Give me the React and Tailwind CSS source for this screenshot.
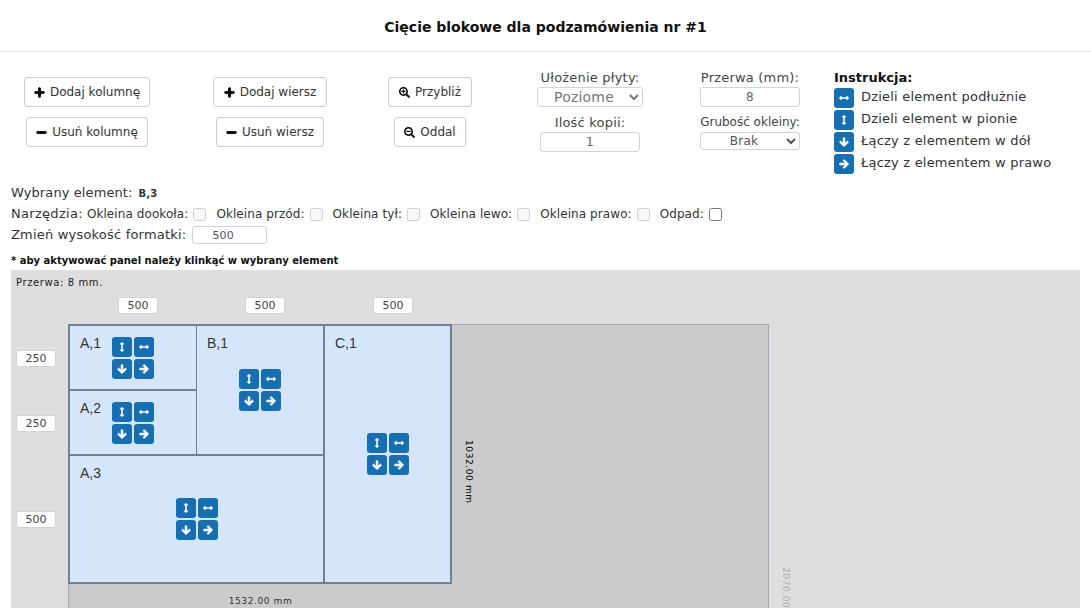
import {
  FaArrowDown,
  FaArrowRight,
  FaArrowsAltH,
  FaArrowsAltV,
  FaMinus,
  FaPlus,
  FaSearchMinus,
  FaSearchPlus,
} from "react-icons/fa";

const ToolButton = ({ icon: Icon, label, className = "", bold = true }) => (
  <button
    className={`flex h-[30px] items-center justify-center gap-[5px] rounded-[3px] border border-[#cfcfcf] bg-white text-[12px] text-[#333] ${className}`}
  >
    <Icon
      className="text-[11px] text-black"
      stroke="currentColor"
      strokeWidth={bold ? 40 : 0}
    />
    {label}
  </button>
);

const IconSquare = ({ icon: Icon, bold = false }) => (
  <div className="flex h-5 w-5 items-center justify-center rounded-[3px] bg-[#176eb0] text-white">
    {bold ? (
      <Icon size={10} stroke="currentColor" strokeWidth={50} />
    ) : (
      <Icon size={10} />
    )}
  </div>
);

const CellActions = () => (
  <div className="grid grid-cols-[20px_20px] gap-0.5">
    <IconSquare icon={FaArrowsAltV} />
    <IconSquare icon={FaArrowsAltH} />
    <IconSquare icon={FaArrowDown} bold />
    <IconSquare icon={FaArrowRight} bold />
  </div>
);

const Piece = ({ name, className = "" }) => (
  <div className={`flex border-[#707f96] bg-[#d6e6fa] ${className}`}>
    <span className="absolute ml-[10px] mt-[9px] font-['Liberation_Sans',sans-serif] text-[14px] leading-4 text-[#333]">
      {name}
    </span>
    <div className="m-auto">
      <CellActions />
    </div>
  </div>
);

const SizeInput = ({ value = "500", className = "" }) => (
  <input
    readOnly
    value={value}
    className={`h-[17px] w-10 rounded-[3px] border border-[#d4d4d4] bg-white text-center text-[11px] text-[#444] outline-none ${className}`}
  />
);

const Instruction = ({ icon, bold, text }) => (
  <div className="flex h-[22px] items-center gap-[7px] text-[13px] tracking-[0.2px] text-[#333]">
    <IconSquare icon={icon} bold={bold} />
    <span className="pb-0.5">{text}</span>
  </div>
);

const Edging = ({ label }) => (
  <>
    <span className="tracking-[0.08px]">{label}</span>
    <input type="checkbox" disabled className="ml-[5px] mr-[10px]" />
  </>
);

const App = () => {
  return (
    <div className="h-screen overflow-hidden bg-white font-['DejaVu_Sans',sans-serif] text-[#333]">
      {/* Header */}
      <div className="flex h-[52px] items-center justify-center border-b border-[#e4e4e4] pt-[3px] text-[14px] font-bold text-[#111]">
        Cięcie blokowe dla podzamówienia nr #1
      </div>

      {/* Toolbar */}
      <div className="flex h-[131px] pt-[25px]">
        <div className="flex w-[174px] flex-col items-center gap-2.5">
          <ToolButton icon={FaPlus} label="Dodaj kolumnę" className="w-[126px]" />
          <ToolButton icon={FaMinus} label="Usuń kolumnę" className="w-[122px]" />
        </div>
        <div className="flex w-[192px] flex-col items-center gap-2.5">
          <ToolButton icon={FaPlus} label="Dodaj wiersz" className="w-[114px]" />
          <ToolButton icon={FaMinus} label="Usuń wiersz" className="w-[108px]" />
        </div>
        <div className="flex w-[128px] flex-col items-center gap-2.5">
          <ToolButton icon={FaSearchPlus} label="Przybliż" className="w-[84px]" bold={false} />
          <ToolButton icon={FaSearchMinus} label="Oddal" className="w-[72px]" bold={false} />
        </div>
        <div className="-mt-2 flex w-[192px] flex-col items-center text-[13px] tracking-[0.2px] text-[#444]">
          <span className="h-[18px] leading-[18px]">Ułożenie płyty:</span>
          <select className="h-5 w-[106px] rounded-[3px] border border-[#d4d4d4] text-center text-[14px] text-[#777]">
            <option>Poziome</option>
          </select>
          <span className="mt-[6px] h-[19px] leading-[19px]">Ilość kopii:</span>
          <input
            readOnly
            value="1"
            className="h-5 w-[100px] rounded-[3px] border border-[#d4d4d4] text-center text-[12px] text-[#666] outline-none"
          />
        </div>
        <div className="-mt-2 flex w-[128px] flex-col items-center text-[13px] tracking-[0.2px] text-[#444]">
          <span className="h-[18px] leading-[18px]">Przerwa (mm):</span>
          <input
            readOnly
            value="8"
            className="h-5 w-[100px] rounded-[3px] border border-[#d4d4d4] text-center text-[12px] text-[#666] outline-none"
          />
          <span className="mt-[6px] h-[19px] text-[12px] tracking-normal leading-[19px]">Grubość okleiny:</span>
          <select className="h-[18px] w-[100px] rounded-[3px] border border-[#d4d4d4] text-center text-[12px] text-[#555]">
            <option>Brak</option>
          </select>
        </div>
        <div className="-mt-2 ml-5 flex flex-col">
          <span className="h-[18px] text-[13px] font-bold leading-[18px] text-[#111]">Instrukcja:</span>
          <Instruction icon={FaArrowsAltH} text="Dzieli element podłużnie" />
          <Instruction icon={FaArrowsAltV} text="Dzieli element w pionie" />
          <Instruction icon={FaArrowDown} bold text="Łączy z elementem w dół" />
          <Instruction icon={FaArrowRight} bold text="Łączy z elementem w prawo" />
        </div>
      </div>

      {/* Selected element tools */}
      <div className="px-[11px] text-[12px] text-[#333]">
        <div className="flex h-5 items-center gap-[6px] text-[13px] tracking-[0.1px]">
          Wybrany element: <b className="text-[10px]">B,3</b>
        </div>
        <div className="flex h-[22px] items-center">
          <span className="mr-1 text-[13px] tracking-[0.3px]">Narzędzia:</span>
          <Edging label="Okleina dookoła:" />
          <Edging label="Okleina przód:" />
          <Edging label="Okleina tył:" />
          <Edging label="Okleina lewo:" />
          <Edging label="Okleina prawo:" />
          <span className="tracking-[0.08px]">Odpad:</span>
          <input type="checkbox" className="ml-[5px]" />
        </div>
        <div className="flex h-[20px] items-center gap-[6px] text-[13px] tracking-[0.2px]">
          Zmień wysokość formatki:
          <input
            readOnly
            value="500"
            className="h-[18px] w-[75px] rounded-[3px] border border-[#d4d4d4] pl-[19px] text-[11px] text-[#555] outline-none"
          />
        </div>
        <div className="flex h-[25px] items-center pt-1.5 text-[10px] font-bold text-[#111]">
          * aby aktywować panel należy klinkąć w wybrany element
        </div>
      </div>

      {/* Cutting canvas */}
      <div className="mx-[11px] h-[600px] bg-[#dedede]">
        <div className="flex h-[26px] items-center pb-[2px] pl-[5px] text-[10px] tracking-[0.6px] text-[#222]">
          Przerwa: 8 mm.
        </div>
        <div className="flex h-7 items-start pl-[107px] pt-[1px]">
          <SizeInput />
          <SizeInput className="ml-[87px]" />
          <SizeInput className="ml-[88px]" />
        </div>
        <div className="flex">
          <div className="flex w-[57px] flex-col pl-[5px] pt-[2px]">
            <div className="flex h-[65px] items-center"><SizeInput value="250" /></div>
            <div className="flex h-[65px] items-center"><SizeInput value="250" /></div>
            <div className="flex h-[126px] items-center"><SizeInput value="500" /></div>
          </div>
          <div className="h-[560px] w-[701px] border-l border-r border-t border-[#a0a8b8] bg-[#cbcbcb]">
            <div className="flex">
              <div className="-ml-px -mt-px flex border-b-2 border-l-2 border-t-2 border-[#707f96]">
                <div className="flex w-[253px] flex-col">
                  <div className="flex">
                    <div className="flex w-[126px] flex-col">
                      <Piece name="A,1" className="h-[65px] border-b-2" />
                      <Piece name="A,2" className="h-[65px] border-b-2" />
                    </div>
                    <Piece name="B,1" className="h-[130px] w-[127px] border-b-2 border-l" />
                  </div>
                  <Piece name="A,3" className="h-[126px]" />
                </div>
                <Piece name="C,1" className="w-[129px] border-l-2 border-r-2" />
              </div>
              <span className="ml-[9px] mt-[115px] text-[9px] tracking-[0.6px] text-black [writing-mode:vertical-rl]">
                1032.00 mm
              </span>
            </div>
            <div className="mt-[11px] w-[383px] text-center text-[9px] tracking-[0.6px] text-[#333]">
              1532.00 mm
            </div>
          </div>
          <span className="ml-[9px] mt-[243px] text-[9px] tracking-[0.6px] text-[#aaa] [writing-mode:vertical-rl]">
            2070.00 mm
          </span>
        </div>
      </div>
    </div>
  );
};

export default App;
